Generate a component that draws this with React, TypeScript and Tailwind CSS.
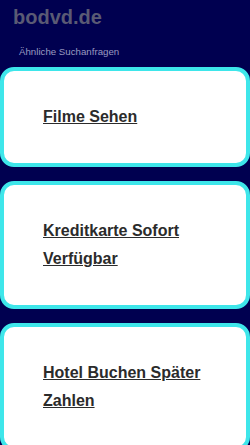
import React from "react";

const items = ["Filme Sehen", "Kreditkarte Sofort Verfügbar", "Hotel Buchen Später Zahlen"];

export default function App() {
  return (
    <div
      className="w-[250px] min-h-[445px] bg-[#000050] pt-[5px]"
      style={{ fontFamily: '"Liberation Sans", Arial, sans-serif' }}
    >
      <div className="px-[13px] text-[20px] leading-[24px] font-bold text-[#5a5a74]">bodvd.de</div>
      <div className="mt-[17px] px-[19px] text-[9.7px] leading-[12px] text-[#9a9ac0]">Ähnliche Suchanfragen</div>
      <div className="mt-[9px] flex flex-col gap-[14px]">
        {items.map((t) => (
          <div
            key={t}
            className="rounded-[14px] border-[4px] border-[#3ee6ea] bg-white pl-[39px] pr-[38px] py-[32px]"
          >
            <a href="#" className="text-[16px] leading-[28px] font-bold text-[#2b2b2b] underline">
              {t}
            </a>
          </div>
        ))}
      </div>
    </div>
  );
}
